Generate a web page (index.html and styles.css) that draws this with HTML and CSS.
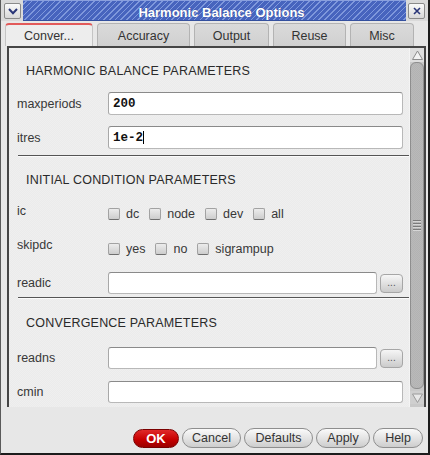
FILE: index.html
```html
<!DOCTYPE html>
<html>
<head>
<meta charset="utf-8">
<link rel="stylesheet" href="styles.css">
</head>
<body>
<div class="window">
  <div class="titlebar">
    <div class="tbtn menu">
      <svg width="10" height="7" viewBox="0 0 10 7"><polyline points="1,1 5,5.2 9,1" fill="none" stroke="#2a3678" stroke-width="2"/></svg>
    </div>
    <div class="title">Harmonic Balance Options</div>
    <div class="tbtn close">
      <svg width="8" height="8" viewBox="0 0 8 8"><path d="M1 1 L7 7 M7 1 L1 7" fill="none" stroke="#2a3678" stroke-width="1.6"/></svg>
    </div>
  </div>
  <div class="main">
    <div class="tabs">
      <div class="tab active t-conv">Conver...</div>
      <div class="tab t-acc">Accuracy</div>
      <div class="tab t-out">Output</div>
      <div class="tab t-reuse">Reuse</div>
      <div class="tab t-misc">Misc</div>
    </div>
    <div class="frame">
      <div class="content">
        <div class="section s1">HARMONIC BALANCE PARAMETERS</div>
        <div class="row r-max">
          <span class="label">maxperiods</span>
          <div class="input"><span class="val">200</span></div>
        </div>
        <div class="row r-itres">
          <span class="label">itres</span>
          <div class="input"><span class="val">1e-2</span><span class="cursor"></span></div>
        </div>
        <div class="sep sep1"></div>
        <div class="section s2">INITIAL CONDITION PARAMETERS</div>
        <div class="row checkrow r-ic">
          <span class="label">ic</span>
          <div class="checks">
            <span class="check"><span class="box"></span>dc</span>
            <span class="check"><span class="box"></span>node</span>
            <span class="check"><span class="box"></span>dev</span>
            <span class="check"><span class="box"></span>all</span>
          </div>
        </div>
        <div class="row checkrow r-skip">
          <span class="label">skipdc</span>
          <div class="checks">
            <span class="check"><span class="box"></span>yes</span>
            <span class="check"><span class="box"></span>no</span>
            <span class="check"><span class="box"></span>sigrampup</span>
          </div>
        </div>
        <div class="row r-readic short">
          <span class="label">readic</span>
          <div class="input"></div>
          <div class="browse">...</div>
        </div>
        <div class="sep sep2"></div>
        <div class="section s3">CONVERGENCE PARAMETERS</div>
        <div class="row r-readns short">
          <span class="label">readns</span>
          <div class="input"></div>
          <div class="browse">...</div>
        </div>
        <div class="row r-cmin short">
          <span class="label">cmin</span>
          <div class="input"></div>
        </div>
      </div>
      <div class="scrollbar">
        <div class="sb-btn up">
          <svg width="13" height="12" viewBox="0 0 13 12"><polygon points="1.5,10.5 6.5,2 11.5,10.5" fill="#f2f2f2" stroke="#8c8c8c" stroke-width="1"/></svg>
        </div>
        <div class="thumb"><div class="grip"><i></i><i></i><i></i><i></i></div></div>
        <div class="sb-btn down">
          <svg width="13" height="12" viewBox="0 0 13 12"><polygon points="1.5,2 6.5,10.5 11.5,2" fill="#e8e8e8" stroke="#9a9a9a" stroke-width="1"/></svg>
        </div>
      </div>
    </div>
    <div class="buttons">
      <div class="btn ok">OK</div>
      <div class="btn b-cancel">Cancel</div>
      <div class="btn b-def">Defaults</div>
      <div class="btn b-apply">Apply</div>
      <div class="btn b-help">Help</div>
    </div>
  </div>
</div>
</body>
</html>
```

FILE: styles.css
```css
html, body {
  margin: 0;
  padding: 0;
  background: #e6e6e6;
}

.window {
  width: 430px;
  height: 455px;
  box-sizing: border-box;
  border-left: 1px solid #5a5a5a;
  border-right: 2px solid #1c1c1c;
  border-bottom: 2px solid #1c1c1c;
  background: #e7e7e7;
  font-family: "Liberation Sans", Arial, sans-serif;
  font-size: 12.5px;
  color: #383838;
  display: flex;
  flex-direction: column;
  overflow: hidden;
}

/* ---------- title bar ---------- */
.titlebar {
  height: 21px;
  display: flex;
  align-items: flex-start;
  background: #dadada;
  flex: 0 0 auto;
}

.tbtn {
  width: 17px;
  height: 16px;
  margin-top: 3px;
  box-sizing: border-box;
  border: 1px solid #8a8a8a;
  border-radius: 2px;
  background: linear-gradient(#fbfbfb, #d8d8d8);
  display: flex;
  align-items: center;
  justify-content: center;
}

.tbtn.menu { margin-left: 3px; margin-right: 2px; }
.tbtn.close { margin-left: 2px; margin-right: 3px; }

.title {
  flex: 1;
  height: 21px;
  box-sizing: border-box;
  padding-left: 14px;
  padding-top: 3px;
  display: flex;
  align-items: center;
  justify-content: center;
  color: #fff;
  font-weight: bold;
  font-size: 13px;
  background:
    repeating-linear-gradient(135deg, #4764be 0 2px, #7f98dc 2px 3px, #4764be 3px 4px);
  border-top: 1px solid #8aa0de;
  border-bottom: 1px solid #34509e;
  text-shadow: 0 0 1px #2b3f85;
}

/* ---------- main ---------- */
.main {
  flex: 1;
  display: flex;
  flex-direction: column;
  padding-top: 2px;
}

.tabs {
  display: flex;
  gap: 4px;
  padding-left: 4px;
  height: 23px;
  flex: 0 0 auto;
}

.tab {
  box-sizing: border-box;
  height: 23px;
  border: 1px solid #b3b3b3;
  border-bottom: none;
  border-radius: 4px 4px 0 0;
  background: linear-gradient(#dadada, #d0d0d0);
  display: flex;
  align-items: center;
  justify-content: center;
  color: #333;
  padding-top: 1px;
}

.tab.active {
  background: #ededed;
  border-color: #c4c4c4;
  border-top: 2px solid #e25a5a;
}

.t-conv { width: 88px; }
.t-acc { width: 93px; }
.t-out { width: 75px; }
.t-reuse { width: 73px; }
.t-misc { width: 64px; }

.frame {
  margin: 0 2px 0 6px;
  height: 361px;
  box-sizing: border-box;
  border: 2px solid #454545;
  border-bottom: none;
  display: flex;
  flex: 0 0 auto;
  background: repeating-conic-gradient(#efefef 0 25%, #ebebeb 0 50%) 0 0 / 2px 2px;
}

.content {
  flex: 1;
  height: 359px;
  overflow: hidden;
  display: flex;
  flex-direction: column;
}

.section {
  padding-left: 17px;
  line-height: 16px;
  height: 16px;
  color: #2a2a2a;
  letter-spacing: 0.2px;
}

.s1 { margin-top: 15px; }
.s2 { margin-top: 15px; }
.s3 { margin-top: 16px; }

.row {
  display: flex;
  align-items: center;
  height: 23px;
  padding-right: 6px;
}

.row.short { height: 22px; }

.label {
  flex: 0 0 99px;
  box-sizing: border-box;
  padding-left: 8px;
  line-height: 16px;
}

.r-max { margin-top: 13px; }
.r-itres { margin-top: 11px; }
.r-ic { margin-top: 15px; height: 20px; }
.r-skip { margin-top: 15px; height: 20px; }
.r-readic { margin-top: 14px; }
.r-readns { margin-top: 16px; }
.r-cmin { margin-top: 12px; }

.checkrow .label { margin-bottom: 5px; }
.r-skip .label { margin-bottom: 7px; }

.input {
  flex: 1;
  align-self: stretch;
  box-sizing: border-box;
  background: #fff;
  border: 1px solid #b8b8b8;
  border-top-color: #8a8a8a;
  border-left-color: #a8a8a8;
  border-radius: 3px;
  display: flex;
  align-items: center;
  padding-left: 4px;
}

.val {
  font-family: "Liberation Mono", "Courier New", monospace;
  font-weight: bold;
  font-size: 12.5px;
  color: #111;
}

.cursor {
  width: 1px;
  height: 13px;
  background: #000;
}

.browse {
  flex: 0 0 23px;
  height: 19px;
  margin-left: 3px;
  box-sizing: border-box;
  border: 1px solid #a6a6a6;
  border-radius: 4px;
  background: linear-gradient(#f6f6f6, #cbcbcb);
  display: flex;
  align-items: center;
  justify-content: center;
  font-size: 10px;
  color: #555;
  line-height: 10px;
}

.checks {
  display: flex;
  align-items: center;
}

.check {
  display: flex;
  align-items: center;
  margin-right: 10px;
  line-height: 16px;
  padding-top: 1px;
}

.box {
  width: 12px;
  height: 12px;
  box-sizing: border-box;
  margin-right: 6px;
  border: 1px solid #a2a2a2;
  border-bottom-color: #6e6e6e;
  border-radius: 2px;
  background: linear-gradient(#ececec, #cdcdcd);
}

.sep {
  margin-left: 9px;
  height: 2px;
  box-sizing: border-box;
  border-top: 1px solid #555;
  border-bottom: 1px solid #fbfbfb;
}

.sep1 { margin-top: 6px; }
.sep2 { margin-top: 3px; }

/* ---------- scrollbar ---------- */
.scrollbar {
  flex: 0 0 15px;
  display: flex;
  flex-direction: column;
  background: #c9c9c9;
  border-left: 1px solid #f4f4f4;
  box-sizing: border-box;
}

.sb-btn {
  height: 14px;
  display: flex;
  align-items: center;
  justify-content: center;
  background: #dedede;
}

.sb-btn.down {
  height: 13px;
  margin-top: 2px;
  background: #cfcfcf;
}

.thumb {
  height: 327px;
  box-sizing: border-box;
  border: 1px solid #8e8e8e;
  border-radius: 6px;
  background: repeating-conic-gradient(#b9b9b9 0 25%, #b3b3b3 0 50%) 0 0 / 2px 2px;
  display: flex;
  align-items: center;
  justify-content: center;
}

.grip {
  display: flex;
  flex-direction: column;
  gap: 1px;
}

.grip i {
  display: block;
  width: 8px;
  height: 1px;
  background: #7c7c7c;
  border-bottom: 1px solid #d6d6d6;
}

/* ---------- buttons ---------- */
.buttons {
  margin-top: 21px;
  height: 20px;
  display: flex;
  justify-content: flex-end;
  gap: 3px;
  padding-right: 5px;
}

.btn {
  height: 20px;
  box-sizing: border-box;
  border: 1px solid #8e8e8e;
  border-radius: 10px;
  background: linear-gradient(#fafafa, #e2e2e2 55%, #cdcdcd);
  display: flex;
  align-items: center;
  justify-content: center;
  color: #333;
}

.btn.ok {
  width: 46px;
  height: 19px;
  margin-top: 1px;
  border-color: #7a0000;
  background: linear-gradient(#e02a2a, #c80000 55%, #9a0000);
  color: #fff;
  font-weight: bold;
  font-size: 13px;
}

.b-cancel { width: 59px; }
.b-def { width: 69px; }
.b-apply { width: 54px; }
.b-help { width: 50px; }
```
